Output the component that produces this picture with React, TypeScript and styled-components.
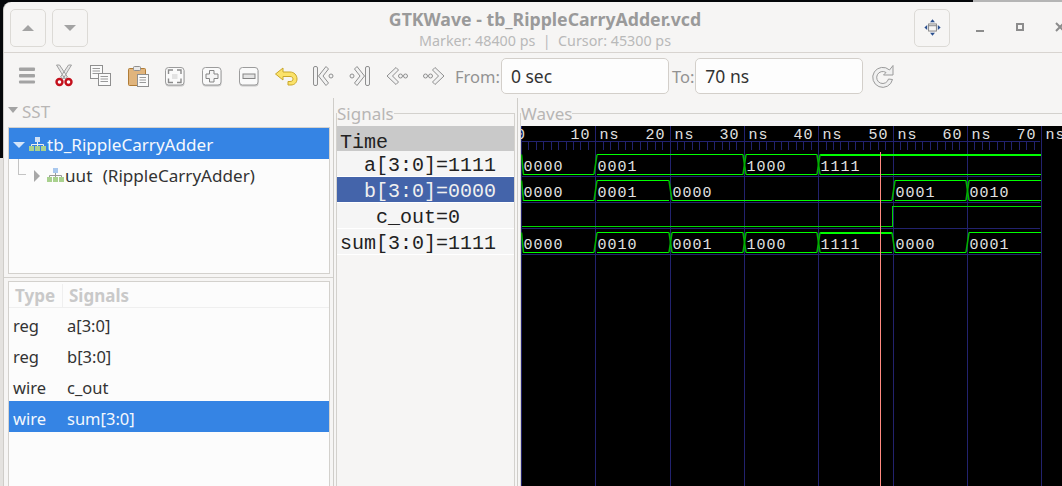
import styled, { createGlobalStyle } from 'styled-components';
import { ReactNode } from 'react';

const GlobalStyle = createGlobalStyle`
  html, body {
    margin: 0;
    height: 100%;
    overflow: hidden;
    background: #000;
  }
  * {
    box-sizing: border-box;
  }
`;

const UI_FONT = `'Noto Sans', 'Open Sans', sans-serif`;
const MONO_FONT = `'Liberation Mono', monospace`;

// ---- waveform data ----
const NS = 7.43;
const ROW_TOPS = [28, 54, 106];
type Seg = { t: number; v: string };
const busA: Seg[] = [
  { t: 0, v: '0000' },
  { t: 10, v: '0001' },
  { t: 30, v: '1000' },
  { t: 40, v: '1111' }
];
const busB: Seg[] = [
  { t: 0, v: '0000' },
  { t: 10, v: '0001' },
  { t: 20, v: '0000' },
  { t: 50, v: '0001' },
  { t: 60, v: '0010' }
];
const busSum: Seg[] = [
  { t: 0, v: '0000' },
  { t: 10, v: '0010' },
  { t: 20, v: '0001' },
  { t: 30, v: '1000' },
  { t: 40, v: '1111' },
  { t: 50, v: '0000' },
  { t: 60, v: '0001' }
];

const xAt = (t: number) => Math.round(t * NS) + 0.5;

const Bus = ({ segs, top }: { segs: Seg[]; top: number }) => {
  const bottom = top + 20;
  return (
    <g>
      {segs.map((s, i) => {
        const x0 = xAt(s.t);
        const x1 = i < segs.length - 1 ? xAt(segs[i + 1].t) : xAt(70) - 1;
        const last = i === segs.length - 1;
        const prevZero = i > 0 && segs[i - 1].v === '0000';
        const zero = s.v === '0000';
        const full = s.v === '1111';
        return (
          <g key={s.t}>
            {!zero && (
              <line
                x1={x0 + 1.5}
                x2={last ? x1 : x1 - 1.5}
                y1={top}
                y2={top}
                stroke='#00ff00'
                strokeWidth={full ? 2 : 1}
              />
            )}
            <line
              x1={x0 + 1.5}
              x2={last ? x1 : x1 - 1.5}
              y1={bottom}
              y2={bottom}
              stroke='#00ff00'
            />
            {i === 0 && <Slope x1={x0} x2={x0 + 2} y1={top} y2={bottom} />}
            {i > 0 && (
              <>
                {!zero && (
                  <Slope x1={x0 - 1.5} x2={x0 + 1.5} y1={bottom} y2={top} />
                )}
                {!prevZero && (
                  <Slope x1={x0 - 1.5} x2={x0 + 1.5} y1={top} y2={bottom} />
                )}
              </>
            )}
            <WaveText x={x0 + 2} y={top + 16.5}>
              {s.v}
            </WaveText>
          </g>
        );
      })}
    </g>
  );
};

const Waveform = () => {
  const ticks = Array.from({ length: 71 }, (_, i) => i);
  const decades = [0, 10, 20, 30, 40, 50, 60, 70];
  return (
    <WaveSvg width={565} height={362}>
      {decades.map(t => (
        <line
          key={t}
          x1={xAt(t)}
          x2={xAt(t)}
          y1={0}
          y2={362}
          stroke='#22226e'
        />
      ))}
      {ticks.map(t => (
        <line
          key={t}
          x1={xAt(t)}
          x2={xAt(t)}
          y1={16}
          y2={24}
          stroke='#22226e'
        />
      ))}
      {[15.5, 50.5, 76.5, 102.5, 128.5].map(y => (
        <line key={y} x1={0} x2={519} y1={y} y2={y} stroke='#22226e' />
      ))}
      {decades.slice(1).map(t => (
        <WaveText key={t} x={xAt(t) - 25} y={13}>
          {t}
        </WaveText>
      ))}
      {decades.slice(1).map(t => (
        <WaveText key={t} x={xAt(t) + 4} y={13}>
          ns
        </WaveText>
      ))}
      <WaveText x={-5} y={13}>
        0
      </WaveText>
      <Bus segs={busA} top={ROW_TOPS[0] + 0.5} />
      <Bus segs={busB} top={ROW_TOPS[1] + 0.5} />
      <polyline
        points='0.5,100.5 371.5,100.5 371.5,80.5 520,80.5'
        fill='none'
        stroke='#00d800'
      />
      <Bus segs={busSum} top={ROW_TOPS[2] + 0.5} />
      <line x1={359.5} x2={359.5} y1={26} y2={362} stroke='#ff8a80' />
    </WaveSvg>
  );
};

// ---- icons ----
const Svg = ({ children }: { children: ReactNode }) => (
  <svg width={24} height={24} viewBox='0 0 24 24'>
    {children}
  </svg>
);

const Hamburger = () => (
  <Svg>
    <g fill='#a3a3a3'>
      <rect x={4} y={3.5} width={16} height={3.5} rx={1} />
      <rect x={4} y={10} width={16} height={3.5} rx={1} />
      <rect x={4} y={16.5} width={16} height={3} rx={1} />
    </g>
  </Svg>
);

const Scissors = () => (
  <Svg>
    <path
      d='M4.5 1 L13 15 L15.5 13 L7.5 1 Z M19.5 1 L11 15 L8.5 13 L16.5 1 Z'
      fill='#e6e6e6'
      stroke='#a0a0a0'
      strokeWidth={1}
    />
    <circle cx={7.5} cy={18} r={3} fill='#fff' stroke='#c4101c' strokeWidth={2.4} />
    <circle cx={16.5} cy={18} r={3} fill='#fff' stroke='#c4101c' strokeWidth={2.4} />
  </Svg>
);

const Page = ({ x, y, w, h }: { x: number; y: number; w: number; h: number }) => (
  <g>
    <rect x={x + 0.5} y={y + 0.5} width={w} height={h} fill='#fafafa' stroke='#8f8f8f' />
    {[3, 5.5, 8].map(d =>
      d + 2 < h ? (
        <line
          key={d}
          x1={x + 2.5}
          x2={x + w - 2}
          y1={y + d + 0.5}
          y2={y + d + 0.5}
          stroke='#9a9a9a'
        />
      ) : null
    )}
  </g>
);

const Copy = () => (
  <Svg>
    <Page x={1} y={1} w={12} h={13} />
    <Page x={9} y={9} w={12} h={12} />
  </Svg>
);

const Paste = () => (
  <Svg>
    <rect x={2.5} y={4.5} width={17} height={17} rx={1} fill='#e0b47c' stroke='#b07c36' />
    <rect x={7.5} y={2.5} width={7} height={4} rx={1} fill='#e8e8e8' stroke='#8f8f8f' />
    <Page x={11} y={10} w={11} h={12} />
  </Svg>
);

const BevelBox = ({ children }: { children: ReactNode }) => (
  <Svg>
    <rect x={2.5} y={4.5} width={19} height={18} rx={3} fill='#c8c8c8' />
    <rect x={2.5} y={3.5} width={18.5} height={17.5} rx={3} fill='#fafafa' stroke='#9c9c9c' />
    {children}
  </Svg>
);

const ZoomFit = () => (
  <BevelBox>
    <path
      d='M5.5 10 V6 H10 M14 6 H18 V10 M18 14.5 V18.5 H14 M10 18.5 H5.5 V14.5'
      fill='none'
      stroke='#8a8a8a'
      strokeWidth={1.4}
    />
    <rect x={9} y={10} width={5.5} height={5} fill='#e2e2e2' />
  </BevelBox>
);

const ZoomIn = () => (
  <BevelBox>
    <path
      d='M9.5 6.5 H14 V10 H18 V14.5 H14 V18 H9.5 V14.5 H6 V10 H9.5 Z'
      fill='#f4f4f4'
      stroke='#858585'
    />
  </BevelBox>
);

const ZoomOut = () => (
  <BevelBox>
    <rect x={6} y={10} width={12} height={4.5} fill='#e4e4e4' stroke='#858585' />
  </BevelBox>
);

const Undo = () => (
  <Svg>
    <path
      d='M9 4 L1.5 10 L9 16 V12.5 H16 C18.2 12.5 19 13.7 19 15 C19 16.5 18 17.5 16 17.5 H14 V21 H17 C20.5 21 23 18.5 23 15 C23 11 20 8 16 8 H9 Z'
      fill='#fbe26a'
      stroke='#c9a72a'
      strokeWidth={1}
    />
  </Svg>
);

const Chevrons = ({
  mirror,
  bar
}: {
  mirror?: boolean;
  bar?: boolean;
}) => (
  <Svg>
    <g
      transform={mirror ? 'matrix(-1 0 0 1 24 0)' : undefined}
      fill='#f2f2f2'
      stroke='#8f8f8f'
    >
      {bar ? (
        <>
          <rect x={2.5} y={2.5} width={4} height={19} rx={1.5} />
          <path d='M15 2.5 L7.5 12 L15 21.5 L17.5 19 L12 12 L17.5 5 Z' />
          <circle cx={20} cy={12} r={2} />
        </>
      ) : (
        <>
          <path d='M11 3.5 L2 12 L11 20.5 L13.5 18 L7.5 12 L13.5 6 Z' />
          <circle cx={15.5} cy={12} r={2} />
          <circle cx={20.5} cy={12} r={2} />
        </>
      )}
    </g>
  </Svg>
);

const Reload = () => (
  <Svg>
    <path
      d='M18.5 6 A10 10 0 1 0 21.5 15.5 L17.5 15 A6 6 0 1 1 15 8.5 L12.5 11 H22 V1.5 Z'
      fill='#f0f0f0'
      stroke='#9a9a9a'
    />
  </Svg>
);

const MoveIcon = () => (
  <svg width={17} height={17} viewBox='0 0 24 24'>
    <g fill='#2a4f8f'>
      <path d='M12 0.5 L15.5 4.5 H8.5 Z' />
      <path d='M12 23.5 L15.5 19.5 H8.5 Z' />
      <path d='M0.5 12 L4.5 8.5 V15.5 Z' />
      <path d='M23.5 12 L19.5 8.5 V15.5 Z' />
    </g>
    <rect x={6.5} y={7} width={11} height={10} fill='none' stroke='#7f7f7f' strokeWidth={1.3} />
    <line x1={6.5} x2={17.5} y1={9.5} y2={9.5} stroke='#7f7f7f' strokeWidth={1.3} />
  </svg>
);

const HierarchyIcon = ({ light }: { light?: boolean }) => (
  <svg width={17} height={15} viewBox='0 0 17 15'>
    <rect x={6} y={0} width={5} height={5} fill={light ? '#cfe0f5' : '#a9c8ee'} />
    <path
      d='M8.5 5 V7.5 M2.5 9 V7.5 H14.5 V9 M8.5 7.5 V9'
      stroke={light ? '#f0f0f0' : '#999'}
      fill='none'
    />
    <rect x={0} y={9} width={5} height={5} fill='#a9d18e' />
    <rect x={6} y={9} width={5} height={5} fill='#a9d18e' />
    <rect x={12} y={9} width={5} height={5} fill='#a9d18e' />
  </svg>
);

// ---- page ----
const TOOLS = [
  <Hamburger />,
  <Scissors />,
  <Copy />,
  <Paste />,
  <ZoomFit />,
  <ZoomIn />,
  <ZoomOut />,
  <Undo />,
  <Chevrons bar />,
  <Chevrons bar mirror />,
  <Chevrons />,
  <Chevrons mirror />
];

const SIGNALS = [
  { type: 'reg', name: 'a[3:0]' },
  { type: 'reg', name: 'b[3:0]' },
  { type: 'wire', name: 'c_out' },
  { type: 'wire', name: 'sum[3:0]', selected: true }
];

const TRACES = [
  { name: 'a[3:0]', value: '1111' },
  { name: 'b[3:0]', value: '0000', selected: true },
  { name: 'c_out', value: '0' },
  { name: 'sum[3:0]', value: '1111' }
];

const App = () => {
  return (
    <Desktop>
      <GlobalStyle />
      <Window>
        <HeaderBar>
          <HeaderGroup>
            <HeaderButton>
              <Triangle />
            </HeaderButton>
            <HeaderButton>
              <Triangle $down />
            </HeaderButton>
          </HeaderGroup>
          <TitleBlock>
            <Title>GTKWave - tb_RippleCarryAdder.vcd</Title>
            <Subtitle>Marker: 48400 ps&nbsp; |&nbsp; Cursor: 45300 ps</Subtitle>
          </TitleBlock>
          <HeaderGroup>
            <HeaderButton>
              <MoveIcon />
            </HeaderButton>
            <WindowControls>
              <WindowControl>
                <MinimizeGlyph />
              </WindowControl>
              <WindowControl>
                <MaximizeGlyph />
              </WindowControl>
              <WindowControl>
                <CloseGlyph viewBox='0 0 10 10' width={10} height={10}>
                  <path d='M1 1 L9 9 M9 1 L1 9' stroke='#8c8c8c' strokeWidth={2} />
                </CloseGlyph>
              </WindowControl>
            </WindowControls>
          </HeaderGroup>
        </HeaderBar>

        <Toolbar>
          {TOOLS.map((icon, i) => (
            <ToolButton key={i}>{icon}</ToolButton>
          ))}
          <ToolLabel>From:</ToolLabel>
          <TimeInput defaultValue='0 sec' readOnly />
          <ToolLabel>To:</ToolLabel>
          <TimeInput defaultValue='70 ns' readOnly />
          <ReloadButton>
            <Reload />
          </ReloadButton>
        </Toolbar>

        <Panes>
          <LeftPane>
            <Expander>
              <ExpanderArrow />
              SST
            </Expander>
            <TreeFrame>
              <TreeRow $selected>
                <TreeArrow $open />
                <HierarchyIcon light />
                <span>tb_RippleCarryAdder</span>
              </TreeRow>
              <TreeRow $child>
                <TreeElbow />
                <TreeArrow />
                <HierarchyIcon />
                <span>uut&nbsp;&nbsp;&nbsp;(RippleCarryAdder)</span>
              </TreeRow>
            </TreeFrame>
            <PaneHandle />
            <ListFrame>
              <ListHeader>
                <HeaderCell>Type</HeaderCell>
                <HeaderCell $divided>Signals</HeaderCell>
              </ListHeader>
              {SIGNALS.map(s => (
                <ListRow key={s.name} $selected={s.selected}>
                  <span>{s.type}</span>
                  <span>{s.name}</span>
                </ListRow>
              ))}
            </ListFrame>
          </LeftPane>

          <SignalsPane>
            <Group>
              <GroupLabel>Signals</GroupLabel>
              <TimeRow>Time</TimeRow>
              {TRACES.map(t => (
                <TraceRow key={t.name} $selected={t.selected}>
                  <TraceName>{t.name}</TraceName>
                  <span>={t.value}</span>
                </TraceRow>
              ))}
            </Group>
          </SignalsPane>

          <WavesPane>
            <Group>
              <GroupLabel>Waves</GroupLabel>
              <Waveform />
            </Group>
          </WavesPane>
        </Panes>
      </Window>
    </Desktop>
  );
};

const Desktop = styled.div`
  width: 1062px;
  height: 486px;
  overflow: hidden;
  padding: 2px 0 0 3px;
  background:
    linear-gradient(90deg, transparent 973px, #b5b5b5 973px) 0 0 / 100% 2px no-repeat,
    linear-gradient(#05070a 0 158px, #e4e2df 158px);
  font-family: ${UI_FONT};
`;

const Window = styled.div`
  width: 1083px;
  height: 484px;
  background: #f6f5f4;
  border-left: 1px solid #cfcdc9;
  border-radius: 8px 8px 0 0;
  overflow: hidden;
`;

const HeaderBar = styled.div`
  height: 51px;
  display: grid;
  grid-template-columns: 1fr auto 1fr;
  align-items: center;
  padding: 0 6px;
  border-bottom: 1px solid #d8d4d0;
`;

const HeaderGroup = styled.div`
  display: flex;
  align-items: center;
  gap: 6px;

  &:last-child {
    justify-content: flex-end;
  }
`;

const HeaderButton = styled.div`
  width: 36px;
  height: 38px;
  display: flex;
  align-items: center;
  justify-content: center;
  border: 1px solid #dcdad6;
  border-radius: 5px;
  margin-top: 1px;
`;

const Triangle = styled.div<{ $down?: boolean }>`
  width: 0;
  height: 0;
  border-left: 6px solid transparent;
  border-right: 6px solid transparent;
  ${p =>
    p.$down ? 'border-top: 6px solid #a3a3a3;' : 'border-bottom: 6px solid #a3a3a3;'}
`;

const TitleBlock = styled.div`
  padding-top: 3px;
  text-align: center;
  white-space: nowrap;
`;

const Title = styled.div`
  font-size: 17.7px;
  line-height: 23px;
  font-weight: 700;
  color: #9a9a9a;
`;

const Subtitle = styled.div`
  font-size: 14.3px;
  line-height: 19px;
  color: #b9b9b9;
`;

const WindowControls = styled.div`
  display: flex;
  align-items: center;
  margin-left: 4px;
`;

const WindowControl = styled.div`
  width: 40px;
  height: 38px;
  display: flex;
  align-items: center;
  justify-content: center;
`;

const MinimizeGlyph = styled.div`
  width: 8px;
  height: 2px;
  margin-top: 8px;
  background: #8c8c8c;
`;

const MaximizeGlyph = styled.div`
  width: 8px;
  height: 8px;
  border: 2px solid #8c8c8c;
`;

const CloseGlyph = styled.svg``;

const Toolbar = styled.div`
  height: 45px;
  display: flex;
  align-items: center;
  padding: 1px 0 0 4px;
`;

const ToolButton = styled.div`
  width: 37px;
  height: 24px;
  display: flex;
  justify-content: center;
`;

const ToolLabel = styled.span`
  font-size: 16.5px;
  color: #929292;
  margin-left: 3px;
`;

const TimeInput = styled.input`
  width: 168px;
  height: 36px;
  margin-left: 1px;
  padding: 0 9px;
  border: 1px solid #d3cfca;
  border-radius: 5px;
  background: #fdfdfd;
  font-family: ${UI_FONT};
  font-size: 17.5px;
  color: #333;
  outline: none;
`;

const ReloadButton = styled.div`
  width: 24px;
  height: 24px;
  margin-left: 8px;
`;

const Panes = styled.div`
  height: 388px;
  display: grid;
  grid-template-columns: 330px 184px 1fr;
`;

const LeftPane = styled.div`
  display: flex;
  flex-direction: column;
  border-right: 1px solid #cfcdc9;
`;

const Expander = styled.div`
  height: 29px;
  display: flex;
  align-items: center;
  gap: 4px;
  padding: 0 0 3px 4px;
  font-size: 17px;
  color: #b8b6b4;
`;

const ExpanderArrow = styled.div`
  width: 0;
  height: 0;
  margin-top: -3px;
  border-left: 5px solid transparent;
  border-right: 5px solid transparent;
  border-top: 6px solid #a3a3a3;
`;

const TreeFrame = styled.div`
  height: 147px;
  margin: 0 3px 0 4px;
  border: 1px solid #d3d1cd;
  background: #fcfcfc;
`;

const TreeRow = styled.div<{ $selected?: boolean; $child?: boolean }>`
  position: relative;
  height: 31px;
  display: flex;
  align-items: center;
  padding-left: ${p => (p.$child ? '25px' : '4px')};
  padding-top: 2px;
  font-size: 17.1px;
  word-spacing: -1px;
  white-space: nowrap;
  color: ${p => (p.$selected ? '#f4f8fd' : '#333')};
  background: ${p => (p.$selected ? '#3584e4' : 'transparent')};

  span {
    margin-left: 1px;
  }
`;

const TreeElbow = styled.div`
  position: absolute;
  left: 9px;
  top: 0;
  width: 8px;
  height: 16px;
  border-left: 1px solid #c4c4c4;
  border-bottom: 1px solid #c4c4c4;
`;

const TreeArrow = styled.div<{ $open?: boolean }>`
  width: 0;
  height: 0;
  ${p =>
    p.$open
      ? `margin-right: 4px;
         border-left: 6px solid transparent;
         border-right: 6px solid transparent;
         border-top: 6px solid #d5e5f9;`
      : `margin-right: 7px;
         border-top: 6px solid transparent;
         border-bottom: 6px solid transparent;
         border-left: 6px solid #a8a8a8;`}
`;

const PaneHandle = styled.div`
  height: 1px;
  margin: 3px 0;
  background: #d3d1cd;
`;

const ListFrame = styled.div`
  flex: 1;
  margin: 0 3px 0 4px;
  border: 1px solid #d3d1cd;
  border-bottom: none;
  background: #fcfcfc;
`;

const ListHeader = styled.div`
  height: 26px;
  display: grid;
  grid-template-columns: 53px 1fr;
  align-items: center;
  padding-top: 2px;
  border-bottom: 1px solid #efefef;
`;

const HeaderCell = styled.div<{ $divided?: boolean }>`
  height: 100%;
  display: flex;
  align-items: center;
  padding-left: 6px;
  font-size: 17px;
  font-weight: 700;
  color: #c9c9c9;
  ${p => p.$divided && 'border-left: 1px solid #efefef;'}
`;

const ListRow = styled.div<{ $selected?: boolean }>`
  height: 31px;
  display: grid;
  grid-template-columns: 54px 1fr;
  align-items: center;
  padding: 4px 0 0 4px;
  font-size: 16.5px;
  color: ${p => (p.$selected ? '#f4f8fd' : '#333')};
  background: ${p => (p.$selected ? '#3584e4' : 'transparent')};
`;

const SignalsPane = styled.div`
  padding: 2px 2px 0 2px;
  border-right: 1px solid #cfcdc9;
`;

const WavesPane = styled.div`
  padding: 2px 0 0 2px;
  overflow: hidden;
`;

const Group = styled.fieldset`
  margin: 0;
  padding: 0;
  height: 400px;
  border: 1px solid #d3d1cd;
  min-width: 0;
`;

const GroupLabel = styled.legend`
  padding: 0;
  margin: 0;
  font-size: 17px;
  line-height: 28px;
  height: 26px;
  color: #b8b6b4;
`;

const TimeRow = styled.div`
  height: 25px;
  padding-left: 3px;
  background: #c9c9c9;
  font-family: ${MONO_FONT};
  font-size: 20px;
  line-height: 33px;
  color: #222;
`;

const TraceRow = styled.div<{ $selected?: boolean }>`
  height: 26px;
  display: grid;
  grid-template-columns: 99px auto;
  justify-content: start;
  border-bottom: 1px solid #fff;
  background: ${p => (p.$selected ? '#4464aa' : '#f5f5f5')};
  font-family: ${MONO_FONT};
  font-size: 20px;
  line-height: 29px;
  color: ${p => (p.$selected ? '#f0f0f0' : '#222')};
`;

const TraceName = styled.span`
  text-align: right;
`;

const WaveSvg = styled.svg`
  display: block;
  background: #000;
  shape-rendering: crispEdges;
`;

const Slope = styled.line`
  stroke: #00b000;
  stroke-width: 1.6;
  shape-rendering: auto;
`;

const WaveText = styled.text`
  font-family: ${MONO_FONT};
  font-size: 15px;
  letter-spacing: 1px;
  fill: #e2e2e2;
  shape-rendering: auto;
`;

export default App;
